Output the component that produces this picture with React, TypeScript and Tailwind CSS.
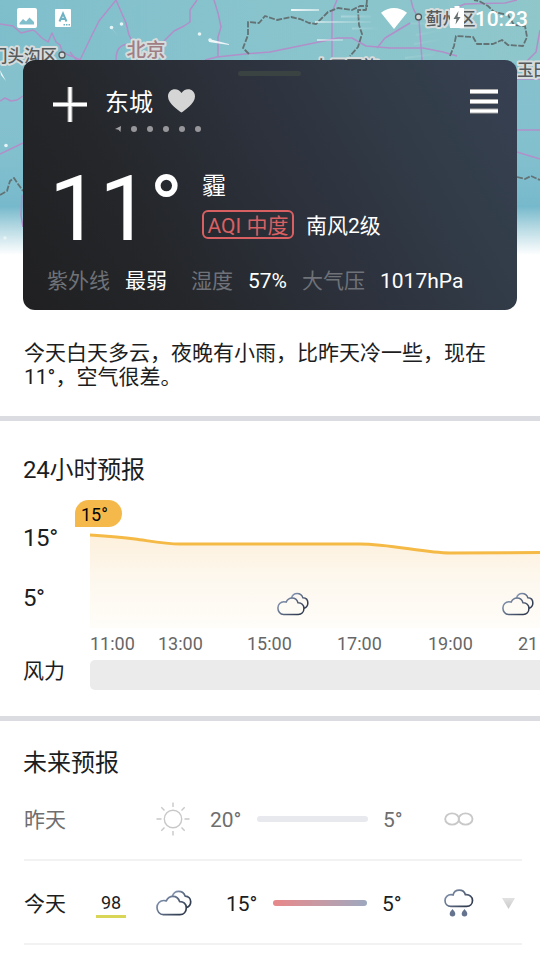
import React from 'react';

const FONT = "font-[Roboto,'Noto_Sans_CJK_SC',sans-serif]";

/** 云图标的渐变描边 */
const CloudGradient: React.FC<{ id: string }> = ({ id }) => (
  <defs>
    <linearGradient id={id} x1="0" y1="0" x2="1" y2="0.6">
      <stop offset="0" stopColor="#8c9dbb" />
      <stop offset="1" stopColor="#333e52" />
    </linearGradient>
  </defs>
);

/** 多云图标 */
const CloudyIcon: React.FC<{ id: string; className: string }> = ({ id, className }) => (
  <svg viewBox="0 0 36 26" className={className} fill="none" strokeWidth="1.7" strokeLinejoin="round">
    <CloudGradient id={id} />
    <path
      d="M16.3 6.3C17.3 3 19.7 1.3 22.6 1.3c3.2 0 5.6 1.9 6.5 4.8 3.5.2 5.6 2.7 5.6 5.7 0 3.1-1.9 5.2-4.5 5.9"
      stroke={`url(#${id})`}
    />
    <path
      d="M7.3 24.7C3.6 24.7 1 21.3 1 17.6c0-4.1 3-7.1 6.8-7.1 1 0 1.7.1 2.5.4 1.3-2.9 3.7-4.6 6.6-4.6 3.3 0 5.8 2.2 6.7 5.3 3.9-.2 6.7 2.5 6.7 6.1 0 4.1-2.6 7-6.4 7z"
      stroke={`url(#${id})`}
    />
  </svg>
);

/** 小雨图标 */
const RainIcon: React.FC = () => (
  <svg viewBox="0 0 30 28" className="h-7 w-[30px]" fill="none">
    <CloudGradient id="rain" />
    <path
      d="M7 17.3C3.3 17.3 1 14.6 1 11.4 1 8.1 3.7 5.6 7 5.6c.8 0 1.4.1 2.1.3C9.8 3 12.1 1.1 15.3 1.1c3.1 0 5.4 1.9 6.1 4.6 4.2-.4 7.1 2.2 7.1 5.7 0 3.3-2.4 5.900-5.900 5.900z"
      stroke="url(#rain)"
      strokeWidth="1.700"
    />
    <path d="M8.500 20c1.700 2 2.800 3.300 2.800 4.800a2.800 2.600 0 0 1-5.600 0c0-1.500 1.100-2.800 2.800-4.800zM20.500 20c1.700 2 2.800 3.300 2.800 4.800a2.800 2.600 0 0 1-5.600 0c0-1.500 1.100-2.800 2.800-4.800z" fill="#65738f" />
  </svg>
);

/** 晴天图标 */
const SunIcon: React.FC = () => (
  <svg viewBox="0 0 34 34" className="size-[34px]" fill="none" stroke="#c8c8c8" strokeWidth="1.4">
    <circle cx="17" cy="17" r="8.700" />
    <path d="M17 .5v4.500M17 29v4.500M.5 17H5.500M28.500 17h5M5.300 5.300l3.200 3.200M25.500 25.500l3.200 3.200M5.300 28.700l3.200-3.200M25.500 8.500l3.200-3.200" />
  </svg>
);

/** 霾图标 */
const HazeIcon: React.FC = () => (
  <svg viewBox="0 0 30 14" className="h-3.5 w-[30px]" fill="none" stroke="#c8c8c8" strokeWidth="1.900">
    <ellipse cx="8.100" cy="7" rx="6.900" ry="5.600" />
    <ellipse cx="21.600" cy="7" rx="6.900" ry="5.600" />
  </svg>
);

/** 顶部的地图背景 */
const MapBackground: React.FC = () => (
  <svg viewBox="0 0 540 255" className="absolute inset-x-0 top-0 h-[255px] w-full">
    <defs>
      <linearGradient id="sea" x1="0" y1="0" x2="0" y2="1">
        <stop offset="0" stopColor="#87c1cc" />
        <stop offset="0.6" stopColor="#83c0ce" />
        <stop offset="0.81" stopColor="#77b9cc" />
        <stop offset="0.9" stopColor="#bbdce5" />
        <stop offset="1" stopColor="#ffffff" />
      </linearGradient>
      <linearGradient id="land" x1="0" y1="0" x2="1" y2="0">
        <stop offset="0" stopColor="#7bbdcb" stopOpacity="0.7" />
        <stop offset="0.5" stopColor="#8ac6cd" stopOpacity="0.6" />
        <stop offset="1" stopColor="#92c9ca" stopOpacity="0.7" />
      </linearGradient>
      <linearGradient id="streak" x1="0" y1="0" x2="1" y2="0">
        <stop offset="0" stopColor="#fff" stopOpacity="0.9" />
        <stop offset="0.4" stopColor="#fff" stopOpacity="0.4" />
        <stop offset="1" stopColor="#fff" stopOpacity="0" />
      </linearGradient>
    </defs>
    <rect width="540" height="255" fill="url(#sea)" />
    <rect width="540" height="62" fill="url(#land)" />
    <g fill="none" stroke="#b18fc9" strokeWidth="1.5" strokeLinejoin="round">
      <path d="M0 24l13 2 8 7 12-3 3 2 6 6 6 4 4-9 4 9 4 3 2 6 6 4 6 2 6 3 12-25 7-14 22-27" />
      <path d="M116 0l10 23 3 12 4 8M116 60c0-12 5-15 12-16M164 41l10-10 10-5 6-4v-12l7-10M214 0l4 13 3 14-3 10 0 20" />
      <path d="M70 52l8 10M205 60l12-3 28-3 25-2 44-9 24-5h14l14 8 24 2h33l20 4 14 4" />
      <path d="M337 0l-5 12v45M377 48l8-10 25-15M411 0l2 8 6 12 3 40M450 10l15-6 40-1 12-3M540 30l-4 22-11 11M0 101l5-3 6 3 6-1 6-4M0 154l23-11M22 195l-1 20 2 12M517 79h23M517 130h23M517 152l23 7" />
    </g>
    <g fill="none" stroke="#637274" strokeWidth="1.8" strokeDasharray="6 1.5" strokeLinejoin="round">
      <path d="M249 54l-6-6 5-13v-13l11 1 6-7 12 4 14-3 9 2 9 4 7 1 12-12 10-4 14 2 8-4 8 0" />
      <path d="M367 0l-1 10h-8l1 15 3 9-4 13-8 9M450 56l4-10 2-10 17 1 4 7h16l9-4 6 5 15 1 4-9-2-11-11-1-6-10-14-3-6-6-9-5-5-1M0 195l7-4 3-10 4-3 4 6 5 7M517 177l8 2 6-3 9 4" />
    </g>
    <g fill="url(#streak)">
      <path d="M291 9h28v2h-28zM315 21h26v2h-26zM341 15.500h30v2h-30zM341 21h30v2h-30zM352 27.500h28v2h-28zM317 39h26v2h-26z" />
      <path d="M416 34l28-5v2l-28 5zM414 43l30-5v2l-30 5zM405 57l30-4v2l-30 4zM411 22.500h16v2h-16zM209 39l20 5v1l-20-3z" />
      <path d="M110 26l9 11-7-8zM121 23l10 9-8-7zM0 70l6 11-5-6zM248 54l22 3v3h-21z" />
    </g>
    <g fill="#e6f4f6">
      <circle cx="111.500" cy="27.500" r="1.800" />
      <circle cx="121.500" cy="24" r="1.800" />
      <circle cx="199.500" cy="34" r="1.800" />
      <circle cx="210" cy="40" r="1.800" />
      <circle cx="6" cy="145.500" r="1.800" />
      <circle cx="5" cy="238" r="1.800" />
    </g>
    <g
      className={FONT}
      fill="#555b5d"
      stroke="#d6dcdc"
      strokeWidth="4"
      strokeLinejoin="round"
      paintOrder="stroke"
      fontWeight="500"
    >
      <text x="-9" y="62" fontSize="16.500">门头沟区</text>
      <text x="126.500" y="56.500" fontSize="19.500" fill="#a07e84">北京</text>
      <text x="426" y="24.500" fontSize="16.500">蓟州区</text>
      <text x="313" y="73" fontSize="16.500">大厂回族</text>
      <text x="517" y="76" fontSize="16.500">玉田</text>
    </g>
    <circle cx="62" cy="55" r="3" fill="#d6dcdc" stroke="#555b5d" strokeWidth="1.300" />
    <circle cx="418.500" cy="17" r="3" fill="#d6dcdc" stroke="#555b5d" strokeWidth="1.300" />
  </svg>
);

/** 系统状态栏 */
const StatusBar: React.FC = () => (
  <div className="relative flex h-9 items-center pr-3 pl-[17px] text-white">
    <svg viewBox="0 0 20 20" className="size-5">
      <path fillRule="evenodd" fill="#fff" d="M2 0h16a2 2 0 0 1 2 2v16a2 2 0 0 1-2 2H2a2 2 0 0 1-2-2V2a2 2 0 0 1 2-2zM2.500 16.500h14.500v-2.500l-4.500-4.500-3.500 4-3-2.500-3.500 4z" />
    </svg>
    <svg viewBox="0 0 16 18" className="ml-[18px] h-[18px] w-4">
      <rect width="16" height="18" rx="1" fill="#fff" />
      <path d="M4.500 12.500L8 4.500l3.500 8M5.700 10h4.600" fill="none" stroke="#6fb2c3" strokeWidth="2" />
      <path d="M8.500 15h1.500v1.500H8.500zM11 15h1.500v1.500H11zM13.500 15H15v1.500h-1.500z" fill="#6fb2c3" />
    </svg>
    <svg viewBox="0 0 26 21" className="mr-[43px] ml-auto h-[21px] w-[26px]">
      <path d="M0 4.800C7.800-1.500 18.200-1.500 26 4.800L13 21z" fill="#fff" />
    </svg>
    <svg viewBox="0 0 14 22" className="mb-0.5 h-[22px] w-3.5">
      <path d="M4.500 0h5v2H14v20H0V2h4.500z" fill="#fff" />
      <path d="M8.500 5L3.500 13h3l-1 5.500L10.500 11h-3z" fill="#666e70" />
    </svg>
    <span className="ml-[11px] pt-0.5 text-[21px] leading-6 font-medium">10:23</span>
  </div>
);

const DETAILS = [
  { label: '紫外线', value: '最弱', labelClass: 'w-[78px]', valueClass: 'w-[66px]' },
  { label: '湿度', value: '57%', labelClass: 'w-[57px]', valueClass: 'w-[54px]' },
  { label: '大气压', value: '1017hPa', labelClass: 'w-[78px]', valueClass: '' },
];

/** 当前天气卡片 */
const CurrentCard: React.FC = () => (
  <section className="relative mx-[23px] mt-6 flex h-[250px] flex-col rounded-xl bg-[linear-gradient(60deg,#202022_0%,#242629_25%,#2d323d_55%,#323d49_80%,#374052_100%)] text-white">
    <div className="mt-[11px] ml-[215px] h-[5px] w-[63px] rounded-full bg-[#3b4242]" />
    <div className="flex h-12 items-center pr-[19px] pl-[30px]">
      <svg viewBox="0 0 34 35" className="mt-2 h-[35px] w-[34px]">
        <path d="M17 0v35M0 17.500h34" stroke="#999" strokeWidth="5" />
        <path d="M17 0v35M0 17.500h34" stroke="#fff" strokeWidth="3" />
      </svg>
      <h1 className="ml-[18px] pt-1.5 text-2xl leading-7">东城</h1>
      <svg viewBox="0 0 27 24" className="mt-0.5 ml-[15px] h-6 w-[27px]">
        <path d="M13.500 23.500C11 22 0 14.500 0 7.500 0 3 3.200.3 7 .3c2.700 0 5 1.400 6.500 3.700C15 1.700 17.300.3 20 .3c3.800 0 7 2.700 7 7.200 0 7-11 14.500-13.500 16z" fill="#d5d5d5" />
      </svg>
      <svg viewBox="0 0 28 25" className="mt-0.5 ml-auto h-[25px] w-7">
        <path d="M0 2.500h28M0 12.500h28M0 22h28" stroke="#aaa" strokeWidth="5" />
        <path d="M0 2.500h28M0 12.500h28M0 22h28" stroke="#fff" strokeWidth="3" />
      </svg>
    </div>
    <div className="ml-[92px] flex h-2.5 items-center gap-2.5">
      <svg viewBox="0 0 6 6" className="size-1.5">
        <path d="M0 3L6 0 5.500 6 3.500 3.800z" fill="#a3a3a6" />
      </svg>
      {[0, 1, 2, 3, 4].map((dot) => (
        <span key={dot} className="size-1.5 rounded-full bg-[#97979b]" />
      ))}
    </div>
    <div className="ml-[26px] flex h-[118px] items-start">
      <div className="mt-[22px] w-[153px] text-[91px] leading-[107px] tracking-[-1px]">11°</div>
      <div className="mt-[38px] flex flex-col">
        <span className="text-2xl leading-7">霾</span>
        <div className="mt-2.5 flex items-center">
          <span className="flex h-[29px] w-[92px] items-center justify-center rounded-md border-2 border-[#d96062] pt-0.5 text-[21px] leading-6 text-[#d96062]">
            AQI 中度
          </span>
          <span className="ml-3 pt-0.5 text-[21px] leading-6">南风2级</span>
        </div>
      </div>
    </div>
    <div className="mt-4 ml-6 flex text-[21px] leading-[26px]">
      {DETAILS.map((item) => (
        <React.Fragment key={item.label}>
          <span className={`${item.labelClass} text-[#6f7278]`}>{item.label}</span>
          <span className={item.valueClass}>{item.value}</span>
        </React.Fragment>
      ))}
    </div>
  </section>
);

const HOURS = [
  { time: '11:00', className: 'w-[68px]' },
  { time: '13:00', className: 'w-[89px]' },
  { time: '15:00', className: 'w-[90px]' },
  { time: '17:00', className: 'w-[91px]' },
  { time: '19:00', className: 'w-[90px]' },
  { time: '21', className: 'w-[22px]' },
];

/** 24小时预报 */
const HourlyForecast: React.FC = () => (
  <section className="h-[295px]">
    <h2 className="pt-[33px] pl-[23px] text-2xl leading-8 tracking-[-0.2px]">24小时预报</h2>
    <div className="flex pt-3.5">
      <div className="flex w-[90px] shrink-0 flex-col pl-[23px] text-2xl leading-7 tracking-[-0.4px]">
        <span className="mt-6">15°</span>
        <span className="mt-8">5°</span>
        <span className="mt-[45px] text-[21px] tracking-normal">风力</span>
      </div>
      <div className="relative w-[450px] shrink-0 overflow-x-clip overflow-y-visible">
        <svg viewBox="0 0 450 128" className="block h-32 w-[450px]">
          <defs>
            <linearGradient id="area" x1="0" y1="35" x2="0" y2="128" gradientUnits="userSpaceOnUse">
              <stop offset="0" stopColor="#fdf0dc" />
              <stop offset="0.5" stopColor="#fdf8ef" />
              <stop offset="1" stopColor="#fffdf9" />
            </linearGradient>
          </defs>
          <path d="M0 35c15 1 30 2 45 4S75 44 90 44h180c30 0 65 9 90 9s60-.5 90-.5V128H0z" fill="url(#area)" />
          <path d="M0 35c15 1 30 2 45 4S75 44 90 44h180c30 0 65 9 90 9s60-.5 90-.5" fill="none" stroke="#f5b945" strokeWidth="3" />
        </svg>
        <CloudyIcon id="cloud-15" className="absolute top-[92px] left-[187px] h-6 w-8" />
        <CloudyIcon id="cloud-20" className="absolute top-[92px] left-[412px] h-6 w-8" />
        <div className="mt-1 flex overflow-hidden text-lg leading-6 text-[#666]">
          {HOURS.map((hour) => (
            <span key={hour.time} className={`${hour.className} shrink-0`}>
              {hour.time}
            </span>
          ))}
        </div>
        <div className="mt-1 h-[30px] rounded-l-[5px] bg-[#ebebeb]" />
      </div>
      {/* 当前温度气泡 */}
      <span className="absolute left-[75px] flex h-[27px] w-[47px] items-center rounded-[14px] rounded-bl-none bg-[#f5b94b] pt-0.5 pl-1.5 text-lg leading-6 text-[#050505]">
        15°
      </span>
    </div>
  </section>
);

/** 未来预报 */
const DailyForecast: React.FC = () => (
  <section>
    <h2 className="pt-[26px] pl-[23px] text-2xl leading-8">未来预报</h2>
    <div className="mr-[18px] ml-6 text-[21px] leading-6">
      <div className="flex h-[82px] items-center border-b-2 border-[#f2f2f2] text-[#6e6e6e]">
        <span className="w-[132px] pt-0.5">昨天</span>
        <SunIcon />
        <span className="ml-5 w-[47px] pt-0.5">20°</span>
        <span className="h-1.5 w-[111px] rounded-full bg-[#e8e9ef]" />
        <span className="ml-[15px] w-[61px] pt-0.5">5°</span>
        <HazeIcon />
      </div>
      <div className="flex h-[84px] items-center border-b-2 border-[#f2f2f2] pt-0.5">
        <span className="w-[72px] pt-0.5">今天</span>
        <span className="mt-0.5 w-[30px] border-b-3 border-[#d9d657] text-center text-lg leading-6">98</span>
        <CloudyIcon id="cloud-today" className="ml-[30px] h-[26px] w-9" />
        <span className="ml-[34px] w-[47px] pt-0.5">15°</span>
        <span className="h-1.5 w-[94px] rounded-full bg-linear-to-r from-[#e88789] to-[#9ca8bf]" />
        <span className="ml-[15px] w-[62px] pt-0.5">5°</span>
        <RainIcon />
        <svg viewBox="0 0 13 11" className="ml-7 h-[11px] w-[13px]">
          <defs>
            <linearGradient id="arrow" x1="0" y1="0" x2="0" y2="1">
              <stop offset="0" stopColor="#e2e2e2" />
              <stop offset="1" stopColor="#c9c9c9" />
            </linearGradient>
          </defs>
          <path d="M0 0h13L6.500 11z" fill="url(#arrow)" />
        </svg>
      </div>
    </div>
  </section>
);

export default function App() {
  return (
    <main className={`relative h-[960px] w-[540px] overflow-hidden bg-white text-[#1c1d1e] ${FONT}`}>
      <MapBackground />
      <StatusBar />
      <CurrentCard />
      <p className="h-[106px] pt-[31px] pr-8 pl-6 text-[21px] leading-6">
        今天白天多云，夜晚有小雨，比昨天冷一些，现在11°，空气很差。
      </p>
      <div className="h-[5px] bg-[#dbdce1]" />
      <HourlyForecast />
      <div className="h-[5px] bg-[#dbdce1]" />
      <DailyForecast />
    </main>
  );
}
